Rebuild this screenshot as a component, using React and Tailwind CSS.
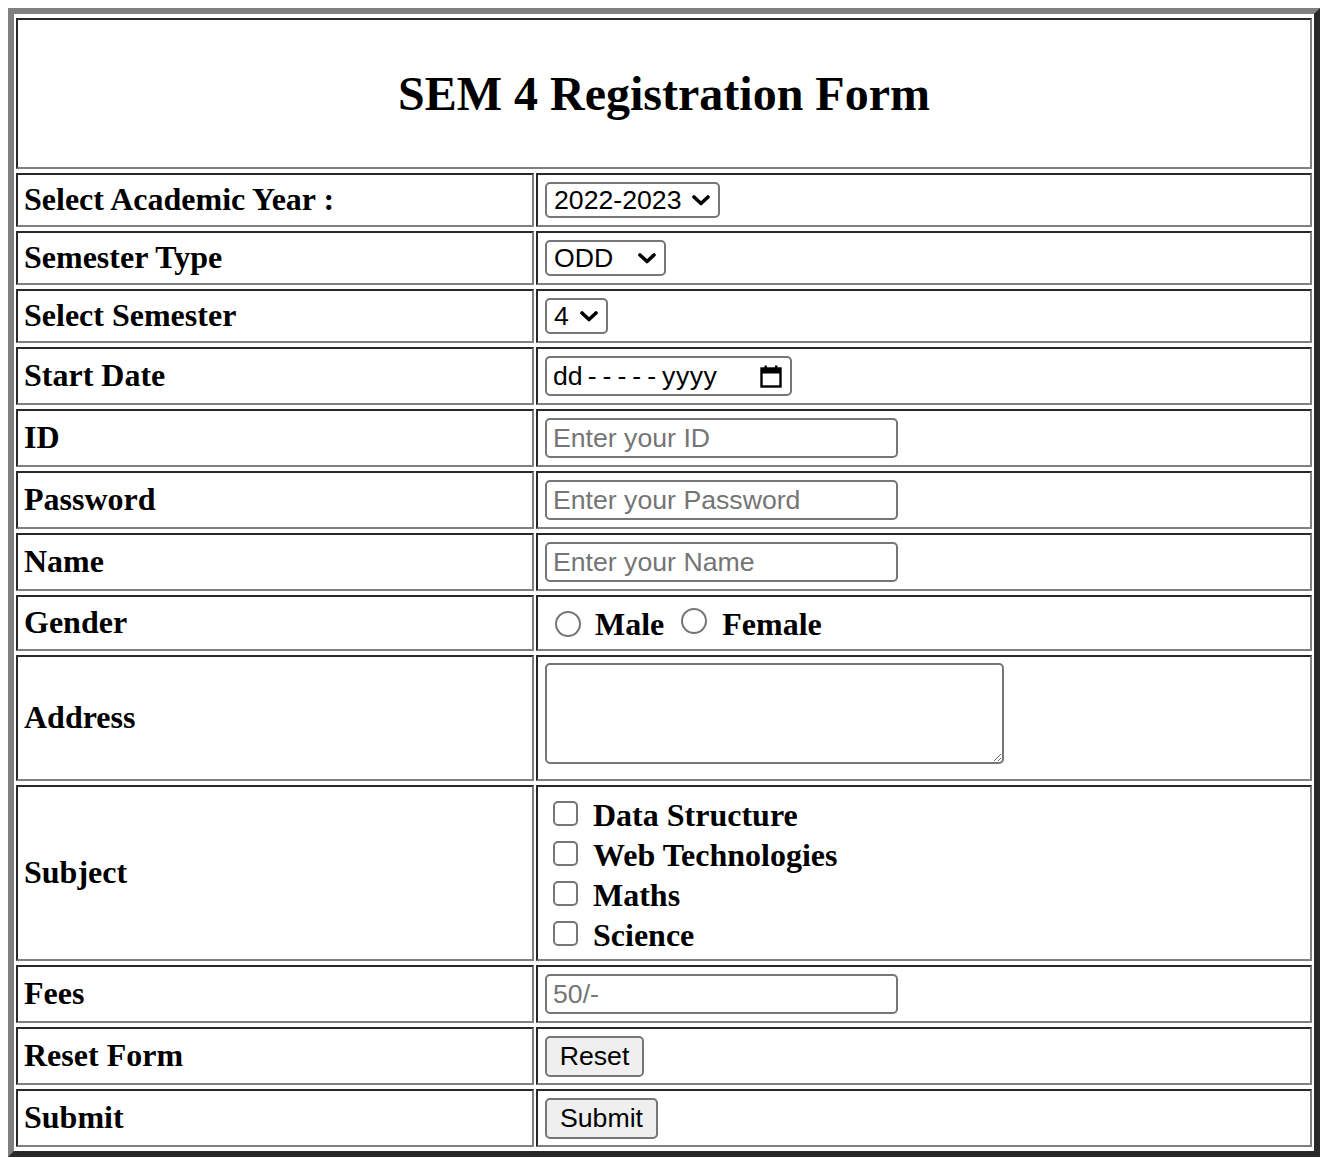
import React from "react";

const cell =
  "border-2 border-t-[#292929] border-l-[#292929] border-b-[#808080] border-r-[#808080] bg-white";
const serif = "font-['Liberation_Serif',_'Times_New_Roman',_serif] font-bold text-black";
const sans = "font-['Liberation_Sans',_Arial,_sans-serif]";

function Chevron() {
  return (
    <svg width="18" height="11" viewBox="0 0 18 11" className="shrink-0">
      <polyline
        points="2,2 9,8.5 16,2"
        fill="none"
        stroke="#000"
        strokeWidth="3.6"
        strokeLinecap="round"
        strokeLinejoin="round"
      />
    </svg>
  );
}

function FakeSelect({ value, w }) {
  return (
    <div
      className={`${w} h-[36px] border-2 border-[#767676] rounded-[5px] bg-white pl-[7px] pr-[8px] flex items-center justify-between ${sans} text-[26.67px] text-black leading-none`}
    >
      <span>{value}</span>
      <Chevron />
    </div>
  );
}

function TextInput({ placeholder }) {
  return (
    <input
      type="text"
      placeholder={placeholder}
      className={`w-[353px] h-[40px] border-2 border-[#767676] rounded-[5px] bg-white pl-[6px] ${sans} text-[26.67px] text-black placeholder:text-[#757575] outline-none`}
    />
  );
}

function Row({ label, h, children, valueClass = "" }) {
  return (
    <div className={`flex gap-[2px] ${h}`}>
      <div className={`${cell} w-[518px] h-full flex items-center pl-[6px] pb-[2px]`}>
        <span className={`${serif} text-[32px] leading-none`}>{label}</span>
      </div>
      <div className={`${cell} flex-1 h-full flex items-center pl-[7px] ${valueClass}`}>{children}</div>
    </div>
  );
}

function Radio() {
  return <span className="inline-block w-[26px] h-[26px] rounded-full border-2 border-[#767676] bg-white shrink-0" />;
}

function Checkbox() {
  return <span className="inline-block w-[25px] h-[25px] rounded-[5px] border-2 border-[#767676] bg-white shrink-0" />;
}

function CalendarIcon() {
  return (
    <svg width="22" height="23" viewBox="0 0 22 23" className="shrink-0">
      <rect x="1.5" y="3.5" width="19" height="18" fill="none" stroke="#000" strokeWidth="2.4" />
      <rect x="1.5" y="3.5" width="19" height="5" fill="#000" />
      <rect x="4.5" y="0.5" width="2.4" height="4" fill="#000" />
      <rect x="15" y="0.5" width="2.4" height="4" fill="#000" />
    </svg>
  );
}

export default function App() {
  return (
    <div className="bg-white min-h-[1158px] pt-[8px] pl-[8px]">
      <div className="w-[1312px] border-[6px] border-t-[#808080] border-l-[#808080] border-b-[#292929] border-r-[#292929] px-[2px] py-[4px] flex flex-col gap-[4px] bg-white">
        <div className={`${cell} h-[151px] flex items-center justify-center`}>
          <h1 className={`${serif} text-[48px] leading-none`}>SEM 4 Registration Form</h1>
        </div>

        <Row label="Select Academic Year :" h="h-[54px]">
          <FakeSelect value="2022-2023" w="w-[175px]" />
        </Row>
        <Row label="Semester Type" h="h-[54px]">
          <FakeSelect value="ODD" w="w-[121px]" />
        </Row>
        <Row label="Select Semester" h="h-[54px]">
          <FakeSelect value="4" w="w-[63px]" />
        </Row>
        <Row label="Start Date" h="h-[58px]">
          <div
            className={`w-[247px] h-[40px] border-2 border-[#767676] rounded-[5px] bg-white pl-[6px] pr-[8px] flex items-center justify-between ${sans} text-[26.67px] text-black leading-none`}
          >
            <span className="flex items-center">
              <span>dd</span>
              <span className="tracking-[6px] pl-[5px]">-----</span>
              <span className="tracking-[0.5px]">yyyy</span>
            </span>
            <CalendarIcon />
          </div>
        </Row>
        <Row label="ID" h="h-[58px]">
          <TextInput placeholder="Enter your ID" />
        </Row>
        <Row label="Password" h="h-[58px]">
          <TextInput placeholder="Enter your Password" />
        </Row>
        <Row label="Name" h="h-[58px]">
          <TextInput placeholder="Enter your Name" />
        </Row>
        <Row label="Gender" h="h-[56px]" valueClass="pl-[17px] pt-[2px]">
          <div className="flex items-center">
            <Radio />
            <span className={`${serif} text-[32px] leading-none ml-[14px]`}>Male</span>
            <span className="ml-[17px]">
              <Radio />
            </span>
            <span className={`${serif} text-[32px] leading-none ml-[15px]`}>Female</span>
          </div>
        </Row>
        <Row label="Address" h="h-[126px]" valueClass="items-start pt-[6px]">
          <textarea className="w-[459px] h-[101px] border-2 border-[#767676] rounded-[5px] bg-white outline-none" />
        </Row>
        <Row label="Subject" h="h-[176px]" valueClass="pl-[15px]">
          <div className="flex flex-col">
            {["Data Structure", "Web Technologies", "Maths", "Science"].map((s) => (
              <div key={s} className="h-[40px] flex items-center">
                <Checkbox />
                <span className={`${serif} text-[32px] leading-none ml-[15px] pt-[4px]`}>{s}</span>
              </div>
            ))}
          </div>
        </Row>
        <Row label="Fees" h="h-[58px]">
          <TextInput placeholder="50/-" />
        </Row>
        <Row label="Reset Form" h="h-[58px]">
          <button
            className={`w-[99px] h-[41px] border-2 border-[#767676] rounded-[5px] bg-[#efefef] ${sans} text-[26.67px] text-black leading-none flex items-center justify-center`}
          >
            Reset
          </button>
        </Row>
        <Row label="Submit" h="h-[58px]">
          <button
            className={`w-[113px] h-[41px] border-2 border-[#767676] rounded-[5px] bg-[#efefef] ${sans} text-[26.67px] text-black leading-none flex items-center justify-center`}
          >
            Submit
          </button>
        </Row>
      </div>
    </div>
  );
}
